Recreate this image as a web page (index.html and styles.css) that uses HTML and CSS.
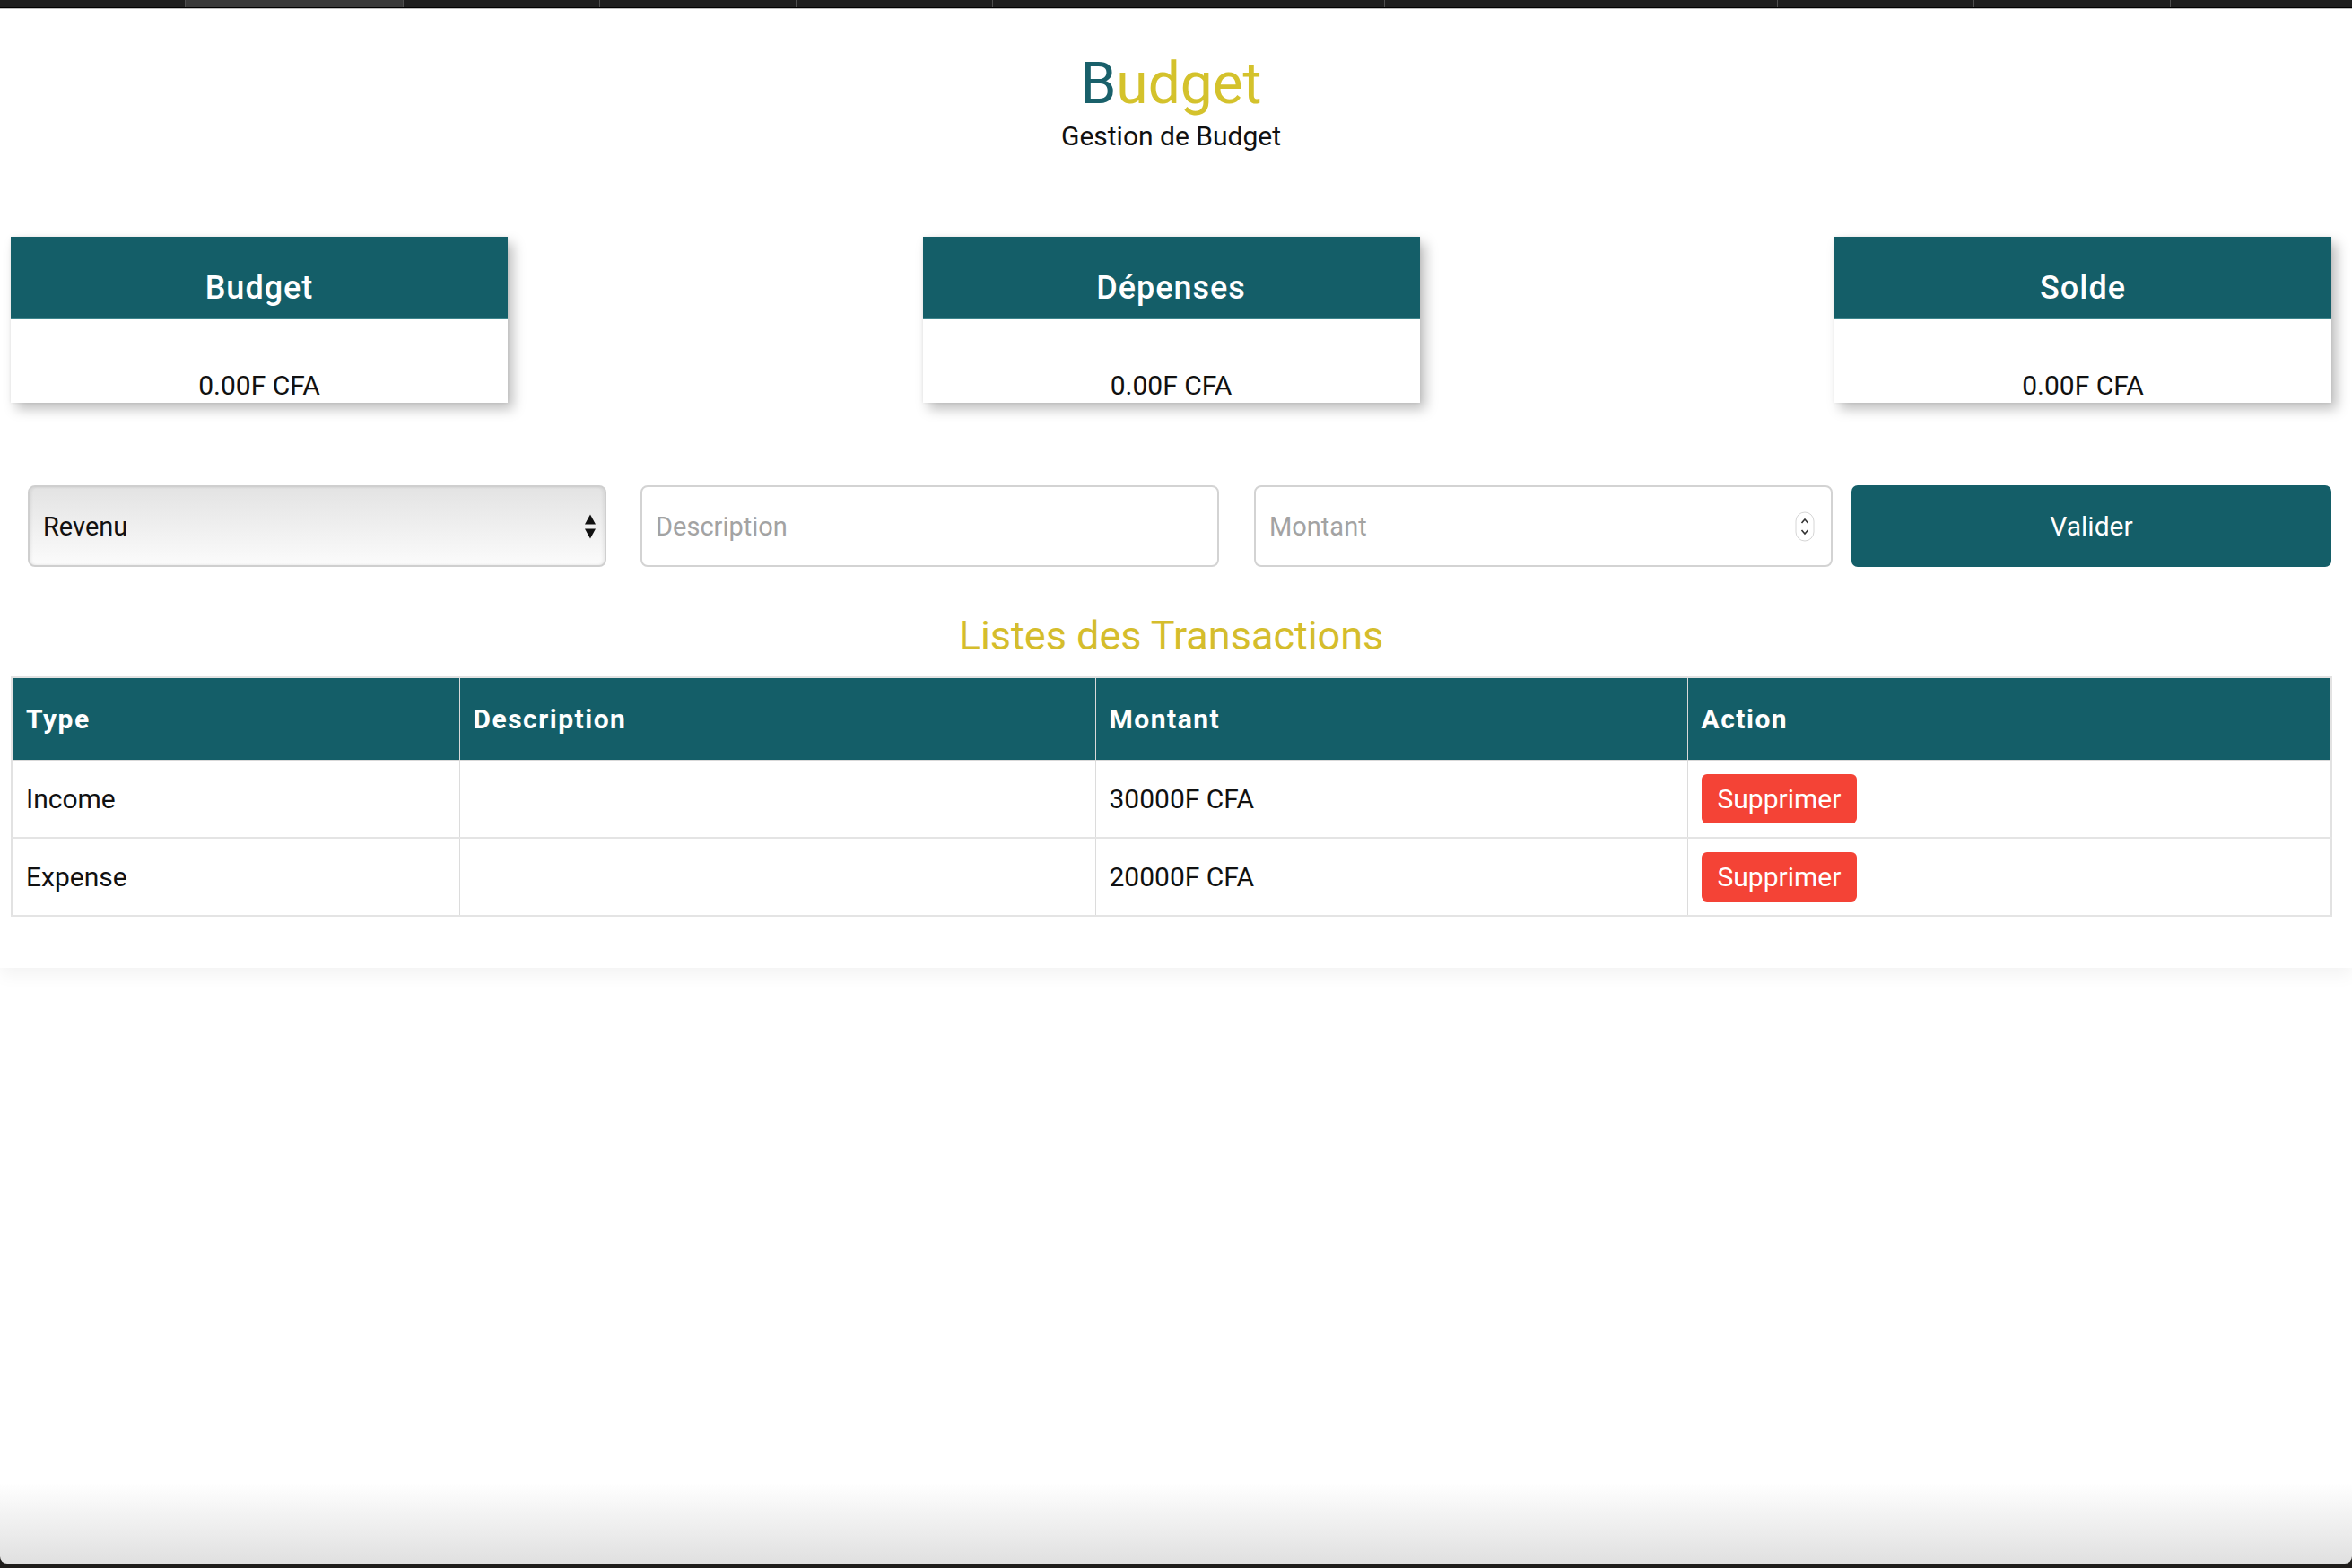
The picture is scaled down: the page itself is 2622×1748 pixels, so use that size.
FILE: index.html
```html
<!DOCTYPE html>
<html lang="fr">
<head>
<meta charset="utf-8">
<title>Budget</title>
<link rel="stylesheet" href="styles.css">
</head>
<body>
<div class="chrome">
  <div class="tab tab-first"></div>
  <div class="tab tab-active"></div>
  <div class="tab"></div>
  <div class="tab"></div>
  <div class="tab"></div>
  <div class="tab"></div>
  <div class="tab"></div>
  <div class="tab"></div>
  <div class="tab"></div>
  <div class="tab"></div>
  <div class="tab"></div>
  <div class="tab tab-last"></div>
</div>
<div class="window">
  <main class="app">
    <header class="hero">
      <h1 class="title"><span class="title-b">B</span>udget</h1>
      <p class="subtitle">Gestion de Budget</p>
    </header>

    <section class="cards">
      <div class="card">
        <h2 class="card-head">Budget</h2>
        <div class="card-body">0.00F CFA</div>
      </div>
      <div class="card">
        <h2 class="card-head">Dépenses</h2>
        <div class="card-body">0.00F CFA</div>
      </div>
      <div class="card">
        <h2 class="card-head">Solde</h2>
        <div class="card-body">0.00F CFA</div>
      </div>
    </section>

    <form class="entry">
      <div class="select-box">
        <select class="select">
          <option>Revenu</option>
          <option>Dépense</option>
        </select>
        <svg class="select-arrows" width="14" height="32" viewBox="0 0 14 32"><polygon points="1,13.5 7,2.5 13,13.5" fill="#111"/><polygon points="1,18.5 13,18.5 7,29.5" fill="#111"/></svg>
      </div>
      <div class="field field-desc">
        <input class="field-input" type="text" placeholder="Description">
      </div>
      <div class="field field-num">
        <input class="field-input" type="text" placeholder="Montant">
        <svg class="spinner" width="22" height="34" viewBox="0 0 22 34"><rect x="1" y="1" width="20" height="32" rx="10" fill="#fff" stroke="#d6d6d6"/><polyline points="7.5,13 11,9 14.5,13" fill="none" stroke="#333" stroke-width="1.6"/><polyline points="7.5,21 11,25 14.5,21" fill="none" stroke="#333" stroke-width="1.6"/></svg>
      </div>
      <button class="btn-valider" type="button">Valider</button>
    </form>

    <h3 class="list-title">Listes des Transactions</h3>

    <table class="tx">
      <colgroup>
        <col class="c-type">
        <col class="c-desc">
        <col class="c-amount">
        <col class="c-action">
      </colgroup>
      <thead>
        <tr><th>Type</th><th>Description</th><th>Montant</th><th>Action</th></tr>
      </thead>
      <tbody>
        <tr><td>Income</td><td></td><td>30000F CFA</td><td><button class="btn-del" type="button">Supprimer</button></td></tr>
        <tr><td>Expense</td><td></td><td>20000F CFA</td><td><button class="btn-del" type="button">Supprimer</button></td></tr>
      </tbody>
    </table>
  </main>
</div>
</body>
</html>
```

FILE: styles.css
```css
* { box-sizing: border-box; }

html, body {
  margin: 0;
  padding: 0;
  background: #1f1d1b;
}

body {
  font-family: Roboto, "Liberation Sans", Arial, sans-serif;
  color: #111;
  height: 1748px;
  overflow: hidden;
}

/* browser tab strip */
.chrome {
  display: flex;
  height: 9px;
  background: #1e1e1e;
  border-bottom: 1px solid #000;
}
.tab {
  flex: 1;
  border-left: 1px solid #4f4f4f;
}
.tab-first { flex: 0 0 206px; border-left: none; }
.tab-active { flex: 0 0 243px; background: #393939; }
.tab-last { flex: 0 0 203px; }

/* window */
.window {
  height: 1734px;
  border-top: 1px solid #bdbdbd;
  border-radius: 0 0 8px 8px;
  background: linear-gradient(to bottom, #ffffff calc(100% - 90px), #e0e0e0 100%);
  overflow: hidden;
}

.app {
  background: #fff;
  padding: 49px 23px 57px 12px;
  box-shadow: 0 8px 18px rgba(0, 0, 0, 0.05);
}

/* header */
.hero { text-align: center; }
.title {
  margin: 0;
  font-size: 64px;
  line-height: 70px;
  font-weight: 400;
  color: #d4c22c;
}
.title-b { color: #19606a; }
.subtitle {
  margin: 5px 0 0;
  font-size: 30px;
  line-height: 36px;
  color: #111;
}

/* summary cards */
.cards {
  margin-top: 94px;
  display: flex;
  justify-content: space-between;
}
.card {
  width: 554px;
  background: #fff;
  box-shadow: 0 0 3px rgba(0, 0, 0, 0.08), 6px 7px 13px rgba(0, 0, 0, 0.26);
}
.card-head {
  margin: 0;
  background: #145e68;
  color: #fff;
  text-align: center;
  font-size: 36px;
  line-height: 36px;
  font-weight: 500;
  letter-spacing: 1px;
  padding: 39px 0 16px;
  border-bottom: 1px solid #3f858d;
}
.card-body {
  padding: 56px 0 1px;
  text-align: center;
  font-size: 30px;
  line-height: 36px;
  color: #111;
}

/* entry form */
.entry {
  margin-top: 92px;
  display: flex;
  height: 91px;
  padding-left: 19px;
}
.select-box {
  width: 645px;
  margin-right: 38px;
  display: flex;
  align-items: center;
  border: 2px solid #cfcfcf;
  border-radius: 8px;
  background: linear-gradient(to bottom, #e3e3e3, #fbfbfb);
  box-shadow: inset 2px 0 3px rgba(0,0,0,0.06), inset -2px 0 3px rgba(0,0,0,0.06);
  padding: 0 9px 0 15px;
}
.select {
  flex: 1;
  appearance: none;
  -webkit-appearance: none;
  border: none;
  background: transparent;
  font-family: inherit;
  font-size: 29px;
  color: #111;
  padding: 0;
  outline: none;
}
.select-arrows { flex: 0 0 auto; }

.field {
  width: 645px;
  display: flex;
  align-items: center;
  border: 2px solid #d3d3d3;
  border-radius: 8px;
  background: #fff;
  padding: 0 18px 0 15px;
}
.field-desc { margin-right: 39px; }
.field-num { margin-right: 21px; }
.field-input {
  flex: 1;
  min-width: 0;
  border: none;
  outline: none;
  background: transparent;
  font-family: inherit;
  font-size: 29px;
  color: #111;
  padding: 0;
}
.field-input::placeholder { color: #a3a3a3; }
.spinner { flex: 0 0 auto; }

.btn-valider {
  flex: 1;
  border: none;
  border-radius: 7px;
  background: #145e68;
  color: #fff;
  font-family: inherit;
  font-size: 30px;
}

/* list */
.list-title {
  margin: 51px 0 19px;
  text-align: center;
  font-size: 45px;
  line-height: 52px;
  font-weight: 400;
  color: #d5bd2c;
}

.tx {
  width: 2586px;
  table-layout: fixed;
  border-collapse: collapse;
  border: 2px solid #e2e2e2;
}
.c-type { width: 499px; }
.c-desc { width: 709px; }
.c-amount { width: 660px; }
.c-action { width: 718px; }

.tx th {
  height: 92px;
  background: #145e68;
  color: #fff;
  text-align: left;
  font-size: 30px;
  font-weight: 700;
  letter-spacing: 1.5px;
  padding: 0 15px;
  border: 1px solid #d9d9d9;
}
.tx td {
  height: 87px;
  padding: 0 15px;
  font-size: 30px;
  color: #111;
  border: 1px solid #dcdcdc;
  border-bottom: 2px solid #e4e4e4;
}

.btn-del {
  border: none;
  border-radius: 6px;
  background: #f44336;
  color: #fff;
  font-family: inherit;
  font-size: 30px;
  line-height: 37px;
  padding: 9px 18px;
}
```
